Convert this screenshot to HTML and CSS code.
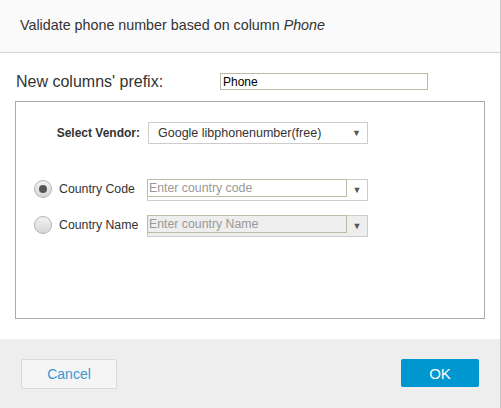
FILE: index.html
```html
<!DOCTYPE html>
<html>

<head>
    <meta charset="utf-8">
    <title>Validate phone number</title>
    <link rel="stylesheet" href="styles.css">
</head>

<body>
    <div class="dialog">
        <div class="header">Validate phone number based on column <i>Phone</i></div>
        <div class="content">
            <div class="prefix">
                <span class="prefix-label">New columns' prefix:</span>
                <input class="prefix-input" type="text" value="Phone">
            </div>
            <div class="box">
                <div class="vendor">
                    <span class="vendor-label">Select Vendor:</span>
                    <div class="select">
                        <span>Google libphonenumber(free)</span>
                        <span class="arrow">&#9660;</span>
                    </div>
                </div>
                <div class="option first">
                    <span class="radio checked"></span>
                    <span class="option-label">Country Code</span>
                    <div class="combo">
                        <input class="combo-input" type="text" placeholder="Enter country code">
                        <span class="arrow">&#9660;</span>
                    </div>
                </div>
                <div class="option">
                    <span class="radio"></span>
                    <span class="option-label">Country Name</span>
                    <div class="combo disabled">
                        <input class="combo-input" type="text" placeholder="Enter country Name">
                        <span class="arrow">&#9660;</span>
                    </div>
                </div>
            </div>
        </div>
        <div class="footer">
            <button class="btn cancel">Cancel</button>
            <button class="btn ok">OK</button>
        </div>
    </div>
</body>

</html>
```

FILE: styles.css
```css
*{
    padding: 0;
    margin: 0;
    box-sizing: border-box;
}
html,body{
    height: 100%;
}
body{
    background-color: #8a8a8a;
    font-family: "Liberation Sans", Arial, sans-serif;
    color: #333;
}
.dialog{
    width: 501px;
    height: 408px;
    background-color: #fff;
    border-right: 1px solid #c8c8c8;
}
.header{
    height: 53px;
    padding: 17px 0 0 20px;
    font-size: 14.3px;
    background-color: #fafafa;
    border-bottom: 1px solid #d4d4d4;
}
.content{
    height: 286px;
    padding-top: 20px;
}
.prefix{
    display: flex;
    align-items: center;
    height: 17px;
    padding-left: 16px;
}
.prefix-label{
    width: 204px;
    font-size: 16px;
}
.prefix-input{
    width: 208px;
    height: 17px;
    border: 1px solid #bbbba8;
    padding-left: 2px;
    font-family: "Liberation Sans", Arial, sans-serif;
    font-size: 12px;
    color: #000;
    outline: none;
}
.box{
    width: 470px;
    height: 218px;
    margin: 11px 0 0 15px;
    border: 1px solid #aaa;
    padding-top: 20px;
}
.vendor{
    display: flex;
    align-items: center;
}
.vendor-label{
    width: 132px;
    padding-right: 8px;
    text-align: right;
    font-size: 12px;
    font-weight: 700;
}
.select{
    display: flex;
    align-items: center;
    justify-content: space-between;
    width: 220px;
    height: 22px;
    border: 1px solid #ccc;
    padding: 0 6px 0 9px;
    font-size: 12.5px;
}
.arrow{
    font-size: 9px;
    color: #555;
}
.option{
    display: flex;
    align-items: center;
    margin-top: 14px;
    padding-left: 18px;
}
.option.first{
    margin-top: 35px;
}
.radio{
    position: relative;
    width: 18px;
    height: 18px;
    margin-bottom: 2px;
    border: 1px solid #b4b4b4;
    border-radius: 50%;
    background: linear-gradient(#f2f2f2, #d6d6d6);
}
.radio.checked::after{
    content: "";
    position: absolute;
    left: 4px;
    top: 4px;
    width: 8px;
    height: 8px;
    border-radius: 50%;
    background-color: #555;
}
.option-label{
    width: 95px;
    padding: 0 0 2px 7px;
    font-size: 12.3px;
}
.combo{
    display: flex;
    align-items: flex-start;
    width: 221px;
    height: 22px;
    border: 1px solid #ccc;
}
.combo.disabled{
    background-color: #eee;
}
.combo-input{
    width: 200px;
    height: 18px;
    margin: -1px 0 0 -1px;
    border: 1px solid #bbbba8;
    background: transparent;
    padding-left: 1px;
    font-family: "Liberation Sans", Arial, sans-serif;
    font-size: 12.3px;
    outline: none;
}
.combo-input::placeholder{
    color: #999;
}
.combo .arrow{
    flex: 1;
    text-align: center;
    line-height: 20px;
}
.footer{
    display: flex;
    justify-content: space-between;
    align-items: flex-start;
    height: 69px;
    padding: 20px 21px 0 21px;
    background-color: #eee;
}
.btn{
    font-family: "Liberation Sans", Arial, sans-serif;
    border-radius: 2px;
}
.cancel{
    width: 96px;
    height: 30px;
    border: 1px solid #d9d9d9;
    background-color: #f5f5f5;
    color: #3a97d4;
    font-size: 14px;
}
.ok{
    width: 78px;
    height: 28px;
    border: none;
    background-color: #0096cf;
    color: #fff;
    font-size: 15px;
}
```
